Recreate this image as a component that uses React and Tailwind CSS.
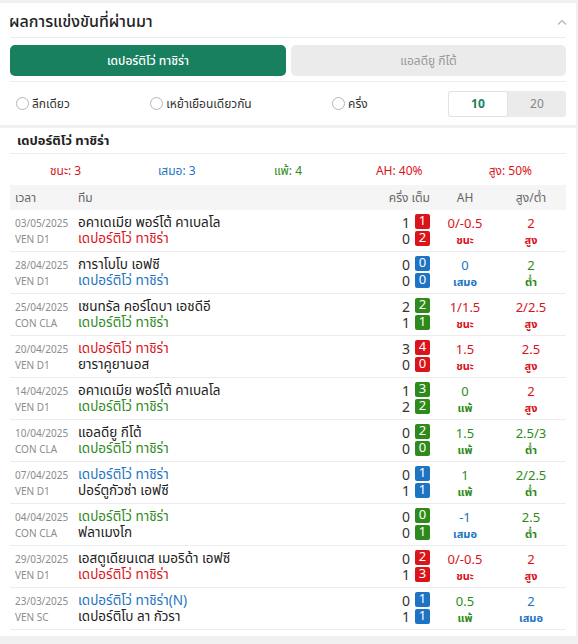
import { useState } from 'react';

const C = {
  red: 'text-[#d9141b]',
  blue: 'text-[#1c74c2]',
  green: 'text-[#2f8a1c]',
};
const BG = {
  red: 'bg-[#d9141b]',
  blue: 'bg-[#1c74c2]',
  green: 'bg-[#2f8a1c]',
};

const TEAM = 'เดปอร์ติโว่ ทาชิร่า';

const rows = [
  { date: '03/05/2025', lg: 'VEN D1', home: 'อคาเดเมีย พอร์โต้ คาเบลโล', away: TEAM, side: 'away', res: 'red', half: [1, 0], full: [1, 2], ah: '0/-0.5', ahC: 'red', ahR: 'ชนะ', ou: '2', ouC: 'red', ouR: 'สูง' },
  { date: '28/04/2025', lg: 'VEN D1', home: 'การาโบโบ เอฟซี', away: TEAM, side: 'away', res: 'blue', half: [0, 0], full: [0, 0], ah: '0', ahC: 'blue', ahR: 'เสมอ', ou: '2', ouC: 'green', ouR: 'ต่ำ' },
  { date: '25/04/2025', lg: 'CON CLA', home: 'เซนทรัล คอร์โดบา เอชดีอี', away: TEAM, side: 'away', res: 'green', half: [2, 1], full: [2, 1], ah: '1/1.5', ahC: 'red', ahR: 'ชนะ', ou: '2/2.5', ouC: 'red', ouR: 'สูง' },
  { date: '20/04/2025', lg: 'VEN D1', home: TEAM, away: 'ยาราคูยานอส', side: 'home', res: 'red', half: [3, 0], full: [4, 0], ah: '1.5', ahC: 'red', ahR: 'ชนะ', ou: '2.5', ouC: 'red', ouR: 'สูง' },
  { date: '14/04/2025', lg: 'VEN D1', home: 'อคาเดเมีย พอร์โต้ คาเบลโล', away: TEAM, side: 'away', res: 'green', half: [1, 2], full: [3, 2], ah: '0', ahC: 'green', ahR: 'แพ้', ou: '2', ouC: 'red', ouR: 'สูง' },
  { date: '10/04/2025', lg: 'CON CLA', home: 'แอลดียู กีโต้', away: TEAM, side: 'away', res: 'green', half: [0, 0], full: [2, 0], ah: '1.5', ahC: 'green', ahR: 'แพ้', ou: '2.5/3', ouC: 'green', ouR: 'ต่ำ' },
  { date: '07/04/2025', lg: 'VEN D1', home: TEAM, away: 'ปอร์ตูกัวซ่า เอฟซี', side: 'home', res: 'blue', half: [0, 1], full: [1, 1], ah: '1', ahC: 'green', ahR: 'แพ้', ou: '2/2.5', ouC: 'green', ouR: 'ต่ำ' },
  { date: '04/04/2025', lg: 'CON CLA', home: TEAM, away: 'ฟลาเมงโก', side: 'home', res: 'green', half: [0, 0], full: [0, 1], ah: '-1', ahC: 'blue', ahR: 'เสมอ', ou: '2.5', ouC: 'green', ouR: 'ต่ำ' },
  { date: '29/03/2025', lg: 'VEN D1', home: 'เอสตูเดียนเตส เมอริด้า เอฟซี', away: TEAM, side: 'away', res: 'red', half: [0, 1], full: [2, 3], ah: '0/-0.5', ahC: 'red', ahR: 'ชนะ', ou: '2', ouC: 'red', ouR: 'สูง' },
  { date: '23/03/2025', lg: 'VEN SC', home: TEAM + '(N)', away: 'เดปอร์ติโบ ลา กัวรา', side: 'home', res: 'blue', half: [0, 1], full: [1, 1], ah: '0.5', ahC: 'green', ahR: 'แพ้', ou: '2', ouC: 'blue', ouR: 'เสมอ' },
];

function Radio({ label }) {
  return (
    <label className="flex items-center gap-[3px] text-[12px] text-[#333]">
      <span className="h-[13px] w-[13px] rounded-full border border-[#b5b5b5] bg-white" />
      {label}
    </label>
  );
}

// two stacked 16px lines, shared by every text column of a row
function Pair({ top, bottom, className = '', topClass = '', bottomClass = '', align = 'justify-start' }) {
  return (
    <div className={`pt-[6px] ${className}`}>
      <div className={`flex h-[16px] items-center leading-none ${align} ${topClass}`}>{top}</div>
      <div className={`flex h-[16px] items-center leading-none ${align} ${bottomClass}`}>{bottom}</div>
    </div>
  );
}

function Row({ r }) {
  const homeC = r.side === 'home' ? C[r.res] : 'text-[#222]';
  const awayC = r.side === 'away' ? C[r.res] : 'text-[#222]';
  const badge = `flex h-[15px] w-[15px] items-center justify-center rounded-[2px] leading-none ${BG[r.res]}`;
  return (
    <div className="flex h-[42px] border-b border-[#ececec]">
      <Pair top={r.date} bottom={r.lg} className="w-[68px] pl-[5px] text-[10px] text-[#8c8c8c]" />
      <Pair top={r.home} bottom={r.away} className="flex-1 text-[13.5px]" topClass={homeC} bottomClass={awayC} />
      <Pair top={r.half[0]} bottom={r.half[1]} className="w-[20px] text-[14px] text-[#333]" align="justify-end" />
      <div className="ml-[5px] flex w-[15px] flex-col gap-[2px] pt-[4px] text-[13px] text-white">
        <span className={badge}>{r.full[0]}</span>
        <span className={badge}>{r.full[1]}</span>
      </div>
      <Pair
        top={r.ah}
        bottom={r.ahR}
        className={`ml-[2px] w-[66px] ${C[r.ahC]}`}
        topClass="text-[13px]"
        bottomClass="text-[11px] font-bold"
        align="justify-center"
      />
      <Pair
        top={r.ou}
        bottom={r.ouR}
        className={`w-[66px] ${C[r.ouC]}`}
        topClass="text-[13px]"
        bottomClass="text-[11px] font-bold"
        align="justify-center"
      />
      <div className="w-[2px]" />
    </div>
  );
}

export default function App() {
  const [tab, setTab] = useState(0);
  const [count, setCount] = useState(10);

  return (
    <div
      className="min-h-[644px] w-[578px] bg-[#f0f0f0] pt-[3px]"
      style={{ fontFamily: 'Tahoma, "Noto Sans Thai", "Noto Sans", "Liberation Sans", sans-serif' }}
    >
      <div className="w-[576px] bg-white">
        <div className="mx-[10px] flex h-[35px] items-center justify-between border-b border-[#ececec] pt-[3px]">
          <h2 className="-ml-[1px] text-[16px] font-medium text-[#222]">ผลการแข่งขันที่ผ่านมา</h2>
          <svg width="10" height="6" viewBox="0 0 10 6" className="mr-[-1px]">
            <path d="M1 5.5L5 1.5L9 5.5" fill="none" stroke="#b0b0b0" strokeWidth="1.1" />
          </svg>
        </div>
        <div className="mx-[10px] flex gap-[5px] border-b border-[#ececec] pt-[7px] pb-[5px]">
          <button
            onClick={() => setTab(0)}
            className={`h-[31px] w-[276px] rounded-[5px] text-[12px] font-medium ${tab === 0 ? 'bg-[#19805f] text-white' : 'bg-[#ebebeb] text-[#999]'}`}
          >
            เดปอร์ติโว่ ทาชิร่า
          </button>
          <button
            onClick={() => setTab(1)}
            className={`h-[31px] w-[275px] rounded-[5px] text-[12px] ${tab === 1 ? 'bg-[#19805f] text-white' : 'bg-[#ebebeb] text-[#999]'}`}
          >
            แอลดียู กีโต้
          </button>
        </div>
        <div className="flex h-[43px] items-center justify-between pl-[16px] pr-[10px]">
          <Radio label="ลีกเดียว" />
          <Radio label="เหย้าเยือนเดียวกัน" />
          <Radio label="ครึ่ง" />
          <div className="flex h-[26px] w-[118px] rounded-[3px] bg-[#ebebeb] text-[12px]">
            {[10, 20].map((n) => (
              <button
                key={n}
                onClick={() => setCount(n)}
                className={`flex-1 rounded-[3px] ${count === n ? 'border border-[#e3e3e3] bg-white font-bold text-[#19805f]' : 'text-[#888]'}`}
              >
                {n}
              </button>
            ))}
          </div>
        </div>
      </div>

      <div className="mt-[3px] w-[576px] bg-white pb-[6px]">
        <div className="mx-[10px] flex h-[26px] items-center border-b border-[#ececec] pt-[2px] pl-[7px] text-[13px] font-bold text-[#222]">
          {TEAM}
        </div>
        <div className="mx-[10px] grid h-[31px] grid-cols-5 items-center pt-[2px] text-center text-[12px]">
          <span className={C.red}>ชนะ: 3</span>
          <span className={C.blue}>เสมอ: 3</span>
          <span className={C.green}>แพ้: 4</span>
          <span className={C.red}>AH: 40%</span>
          <span className={C.red}>สูง: 50%</span>
        </div>
        <div className="mx-[10px]">
          <div className="flex h-[25px] items-center bg-[#f5f5f5] pt-[1px] text-[12px] text-[#666]">
            <div className="w-[68px] pl-[5px]">เวลา</div>
            <div className="flex-1">ทีม</div>
            <div className="w-[60px] text-right">ครึ่ง เต็ม</div>
            <div className="ml-[2px] w-[66px] text-center">AH</div>
            <div className="w-[66px] text-center">สูง/ต่ำ</div>
            <div className="w-[2px]" />
          </div>
          {rows.map((r) => (
            <Row key={r.date} r={r} />
          ))}
        </div>
      </div>
    </div>
  );
}
